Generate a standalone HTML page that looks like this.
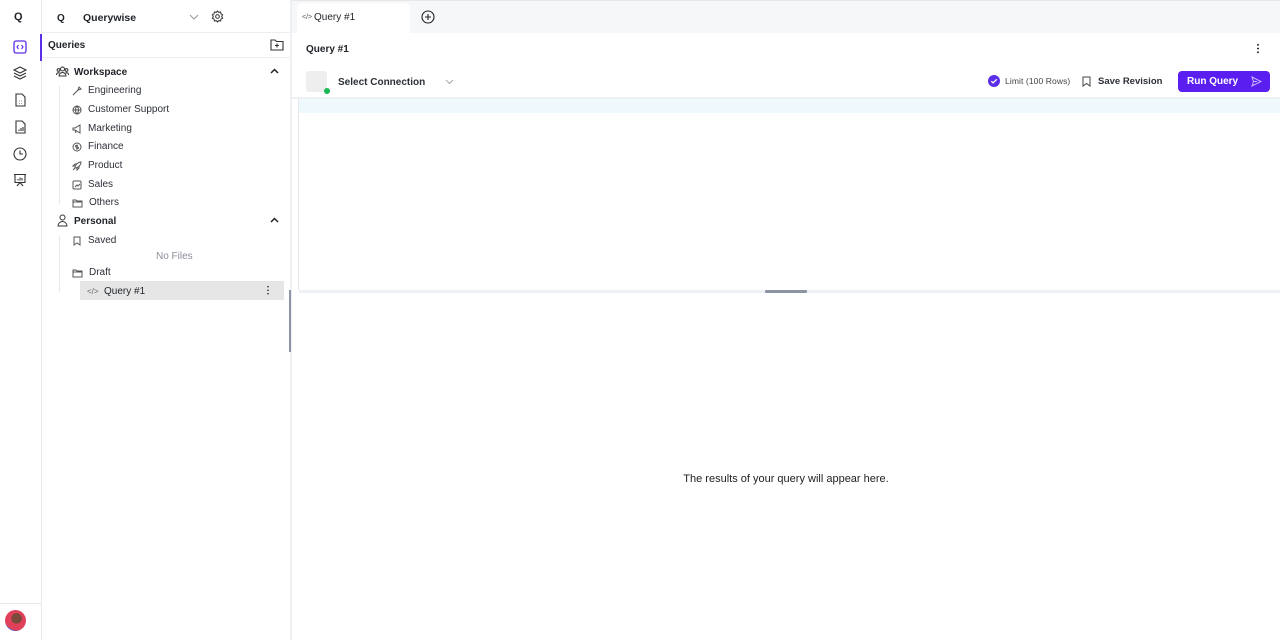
<!DOCTYPE html>
<html><head><meta charset="utf-8"><style>
*{box-sizing:border-box;margin:0;padding:0}
body{width:1280px;height:640px;overflow:hidden;font-family:"Liberation Sans",sans-serif;color:#1f2328;background:#fff;position:relative;font-size:10px}
.abs{position:absolute}
svg{display:block}
.rail{left:0;top:0;width:42px;height:640px;border-right:1px solid #e8e9ec;background:#fff}
.ri{position:absolute;left:13px}
.side{left:42px;top:0;width:248px;height:640px;background:#fff}
.item{position:absolute;left:30px;height:18px;display:flex;align-items:center;font-size:10px;color:#2b2f36;padding-top:1px}
.item svg{margin-right:6px}
</style></head><body>
<div class="abs" style="left:0;top:0;width:1280px;height:1px;background:#e5e7eb"></div>
<div class="abs rail">
 <div class="ri" style="top:11px;left:14px;font-weight:bold;font-size:11px">Q</div>
 <svg class="ri" style="top:40px" width="14" height="14" viewBox="0 0 14 14"><rect x="1" y="1" width="12" height="12" rx="2" fill="none" stroke="#5b2ee8" stroke-width="1.3"/><path d="M5.5 5L4 7l1.5 2M8.5 5L10 7l-1.5 2" fill="none" stroke="#5b2ee8" stroke-width="1.1"/></svg>
 <svg class="ri" style="top:66px" width="14" height="14" viewBox="0 0 14 14" fill="none" stroke="#333" stroke-width="1.1"><path d="M7 1L1 4l6 3 6-3z"/><path d="M1 7l6 3 6-3M1 10l6 3 6-3"/></svg>
 <svg class="ri" style="top:93px" width="14" height="14" viewBox="0 0 14 14" fill="none" stroke="#333" stroke-width="1.1"><path d="M3 1h6l3 3v9H3z"/><path d="M6 8h.5M8.5 8h.5M6 10.5h.5M8.5 10.5h.5"/></svg>
 <svg class="ri" style="top:120px" width="14" height="14" viewBox="0 0 14 14" fill="none" stroke="#333" stroke-width="1.1"><path d="M3 1h6l3 3v9H3z"/><path d="M6 11V9.5M8 11V8M10 11V7"/></svg>
 <svg class="ri" style="top:147px" width="14" height="14" viewBox="0 0 14 14" fill="none" stroke="#333" stroke-width="1.1"><circle cx="7" cy="7" r="6"/><path d="M7 3.5V7h3"/></svg>
 <svg class="ri" style="top:173px" width="14" height="14" viewBox="0 0 14 14" fill="none" stroke="#333" stroke-width="1.1"><path d="M1 1.5h12M2 1.5v8h10v-8M4 13l3-3.5 3 3.5M5 7.5V6M7 7.5V4.5M9 7.5V5"/></svg>
 <div class="abs" style="left:0;top:603px;width:41px;height:1px;background:#e8e9ec"></div>
 <div class="abs" style="left:5px;top:610px;width:21px;height:21px;border-radius:50%;background:radial-gradient(circle at 55% 40%,#7a4a3a 0 30%,#e0405a 32% 70%,#3b5be0 72%)"></div>
</div>
<div class="abs side">
 <div class="abs" style="left:15px;top:13px;font-weight:bold;font-size:10px">Q</div>
 <div class="abs" style="left:41px;top:12px;font-weight:bold;font-size:10.5px">Querywise</div>
 <svg class="abs" style="left:147px;top:13px" width="10" height="8" viewBox="0 0 10 8"><path d="M1 2l4 4 4-4" fill="none" stroke="#999" stroke-width="1"/></svg>
 <svg class="abs" style="left:169px;top:10px" width="13" height="13" viewBox="0 0 14 14" fill="none" stroke="#333" stroke-width="1.1"><circle cx="7" cy="7" r="2"/><path d="M7 1l1.3 1.6 2-.5.4 2 1.8 1-1 1.9 1 1.9-1.8 1-.4 2-2-.5L7 13l-1.3-1.6-2 .5-.4-2-1.8-1 1-1.9-1-1.9 1.8-1 .4-2 2 .5z"/></svg>
 <div class="abs" style="left:0;top:32px;width:248px;height:1px;background:#eceef1"></div>
 <div class="abs" style="left:-2px;top:34px;width:2px;height:27px;background:#5b2ee8"></div>
 <div class="abs" style="left:6px;top:40px;font-weight:bold;font-size:10px">Queries</div>
 <svg class="abs" style="left:228px;top:38px" width="14" height="13" viewBox="0 0 14 13" fill="none" stroke="#333" stroke-width="1.1"><path d="M1 2h4l1.5 1.5H13V12H1z"/><path d="M7 5.5v4M5 7.5h4"/></svg>
 <div class="abs" style="left:0;top:57px;width:248px;height:1px;background:#eceef1"></div>
 <svg class="abs" style="left:14px;top:66px" width="13" height="12" viewBox="0 0 13 12" fill="none" stroke="#333" stroke-width="1"><circle cx="6.5" cy="3" r="2"/><circle cx="2.5" cy="4" r="1.4"/><circle cx="10.5" cy="4" r="1.4"/><path d="M3 10a3.5 3.5 0 017 0zM0.5 9a2 2 0 013-2M12.5 9a2 2 0 00-3-2"/></svg>
 <div class="abs" style="left:32px;top:67px;font-weight:bold;font-size:10px">Workspace</div>
 <svg class="abs" style="left:228px;top:68px" width="9" height="7" viewBox="0 0 9 7"><path d="M1 5l3.5-3.5L8 5" fill="none" stroke="#222" stroke-width="1.5"/></svg>
 <div class="abs" style="left:17px;top:86px;width:1px;height:118px;background:#e5e7eb"></div>
 <div class="item" style="top:81px"><svg width="10" height="10" viewBox="0 0 10 10" fill="none" stroke="#555"><path d="M1 9l5-5M6 4l1-3 2 2-3 1"/></svg>Engineering</div>
 <div class="item" style="top:100px"><svg width="10" height="10" viewBox="0 0 10 10" fill="none" stroke="#555"><circle cx="5" cy="5" r="4"/><path d="M1 5h8M5 1c2 2 2 6 0 8M5 1c-2 2-2 6 0 8"/></svg>Customer Support</div>
 <div class="item" style="top:119px"><svg width="10" height="10" viewBox="0 0 10 10" fill="none" stroke="#555"><path d="M1 4h2l5-3v8L3 6H1zM3 6l1 3"/></svg>Marketing</div>
 <div class="item" style="top:137px"><svg width="10" height="10" viewBox="0 0 10 10" fill="none" stroke="#555"><circle cx="5" cy="5" r="4"/><path d="M6 3.5H4.3a.8.8 0 000 1.6h1.4a.8.8 0 010 1.6H4M5 2.5v5"/></svg>Finance</div>
 <div class="item" style="top:156px"><svg width="10" height="10" viewBox="0 0 10 10" fill="none" stroke="#555"><path d="M3 7C3 4 6 1 9 1c0 3-3 6-6 6zM3 5L1 5l2-2h2M5 7v2l2-2V5M1 9l2-2"/></svg>Product</div>
 <div class="item" style="top:175px"><svg width="10" height="10" viewBox="0 0 10 10" fill="none" stroke="#555"><rect x="1" y="1" width="8" height="8" rx="1"/><path d="M3 7l2-2 1 1 2-2"/></svg>Sales</div>
 <div class="item" style="top:193px"><svg width="11" height="10" viewBox="0 0 11 10" fill="none" stroke="#555"><path d="M1 2h3l1 1h5v6H1z"/><path d="M1 4h9"/></svg>Others</div>
 <svg class="abs" style="left:15px;top:214px" width="11" height="13" viewBox="0 0 11 13" fill="none" stroke="#333" stroke-width="1"><circle cx="5.5" cy="3.5" r="2.5"/><path d="M1 12a4.5 4.5 0 019 0z"/></svg>
 <div class="abs" style="left:32px;top:216px;font-weight:bold;font-size:10px">Personal</div>
 <svg class="abs" style="left:228px;top:217px" width="9" height="7" viewBox="0 0 9 7"><path d="M1 5l3.5-3.5L8 5" fill="none" stroke="#222" stroke-width="1.5"/></svg>
 <div class="abs" style="left:17px;top:236px;width:1px;height:56px;background:#e5e7eb"></div>
 <div class="item" style="top:231px"><svg width="10" height="10" viewBox="0 0 10 10" fill="none" stroke="#555"><path d="M2 1h6v8L5 7 2 9z"/></svg>Saved</div>
 <div class="abs" style="left:114px;top:251px;font-size:10px;color:#8a8f98">No Files</div>
 <div class="item" style="top:263px"><svg width="11" height="10" viewBox="0 0 11 10" fill="none" stroke="#555"><path d="M1 2h3l1 1h5v6H1z"/><path d="M1 4h9"/></svg>Draft</div>
 <div class="abs" style="left:38px;top:281px;width:204px;height:19px;background:#e6e6e6"></div>
 <div class="abs" style="left:45px;top:287px;font-size:8px;color:#666">&lt;/&gt;</div>
 <div class="abs" style="left:62px;top:286px;font-size:10px">Query #1</div>
 <div class="abs" style="left:225px;top:285px;width:2px;height:10px;background:radial-gradient(circle,#333 40%,transparent 45%) 0 0/2px 3.5px"></div>
</div>
<div class="abs" style="left:290px;top:0;width:2px;height:640px;background:#eef0f3"></div>
<div class="abs" style="left:289px;top:290px;width:2px;height:62px;background:#8c95a3"></div>
<div class="abs" style="left:292px;top:1px;width:988px;height:32px;background:#f6f7f9"></div>
<div class="abs" style="left:297px;top:3px;width:113px;height:30px;background:#fff;border-radius:4px 4px 0 0"></div>
<div class="abs" style="left:302px;top:14px;font-size:7px;color:#555">&lt;/&gt;</div>
<div class="abs" style="left:314px;top:12px;font-size:10px">Query #1</div>
<svg class="abs" style="left:421px;top:10px" width="14" height="14" viewBox="0 0 14 14" fill="none" stroke="#222" stroke-width="1.1"><circle cx="7" cy="7" r="6"/><path d="M7 4v6M4 7h6"/></svg>
<div class="abs" style="left:306px;top:44px;font-weight:bold;font-size:10px">Query #1</div>
<div class="abs" style="left:1257px;top:43px;width:2px;height:11px;background:radial-gradient(circle,#222 40%,transparent 45%) 0 0/2px 3.7px"></div>
<div class="abs" style="left:306px;top:71px;width:21px;height:21px;background:#eeeeee;border-radius:3px"></div>
<div class="abs" style="left:324px;top:88px;width:6px;height:6px;background:#18b855;border-radius:50%"></div>
<div class="abs" style="left:338px;top:77px;font-weight:bold;font-size:10px;color:#2b2f36">Select Connection</div>
<svg class="abs" style="left:445px;top:79px" width="9" height="6" viewBox="0 0 9 6"><path d="M1 1l3.5 3.5L8 1" fill="none" stroke="#aaa"/></svg>
<svg class="abs" style="left:988px;top:75px" width="12" height="12" viewBox="0 0 12 12"><circle cx="6" cy="6" r="6" fill="#5b2ee8"/><path d="M3.3 6.2l1.8 1.7L8.8 4.3" fill="none" stroke="#fff" stroke-width="1.3"/></svg>
<div class="abs" style="left:1005px;top:76px;font-size:8.5px;color:#444;letter-spacing:0.1px">Limit (100 Rows)</div>
<svg class="abs" style="left:1082px;top:76px" width="9" height="11" viewBox="0 0 9 11"><path d="M1 1h7v9L4.5 7.5 1 10z" fill="none" stroke="#444"/></svg>
<div class="abs" style="left:1098px;top:76px;font-weight:bold;font-size:9.5px;color:#2b2f36">Save Revision</div>
<div class="abs" style="left:1178px;top:71px;width:92px;height:21px;background:#5b1ef0;border-radius:4px"></div>
<div class="abs" style="left:1187px;top:76px;font-weight:bold;font-size:10px;color:#fff">Run Query</div>
<svg class="abs" style="left:1251px;top:76px" width="11" height="11" viewBox="0 0 11 11"><path d="M1 1l9 4.5L1 10l1.5-4.5z M2.5 5.5H6" fill="none" stroke="#c9bbff"/></svg>
<div class="abs" style="left:292px;top:97px;width:988px;height:2px;background:#eef0f3"></div>
<div class="abs" style="left:298px;top:99px;width:1px;height:191px;background:#e5e7eb"></div>
<div class="abs" style="left:299px;top:99px;width:981px;height:14px;background:#eef8fd"></div>
<div class="abs" style="left:299px;top:290px;width:981px;height:3px;background:#eef2f6"></div>
<div class="abs" style="left:765px;top:290px;width:42px;height:3px;background:#8a94a3;border-radius:1px"></div>
<div class="abs" style="left:292px;top:473px;width:988px;text-align:center;font-size:11px;color:#222">The results of your query will appear here.</div>
</body></html>
